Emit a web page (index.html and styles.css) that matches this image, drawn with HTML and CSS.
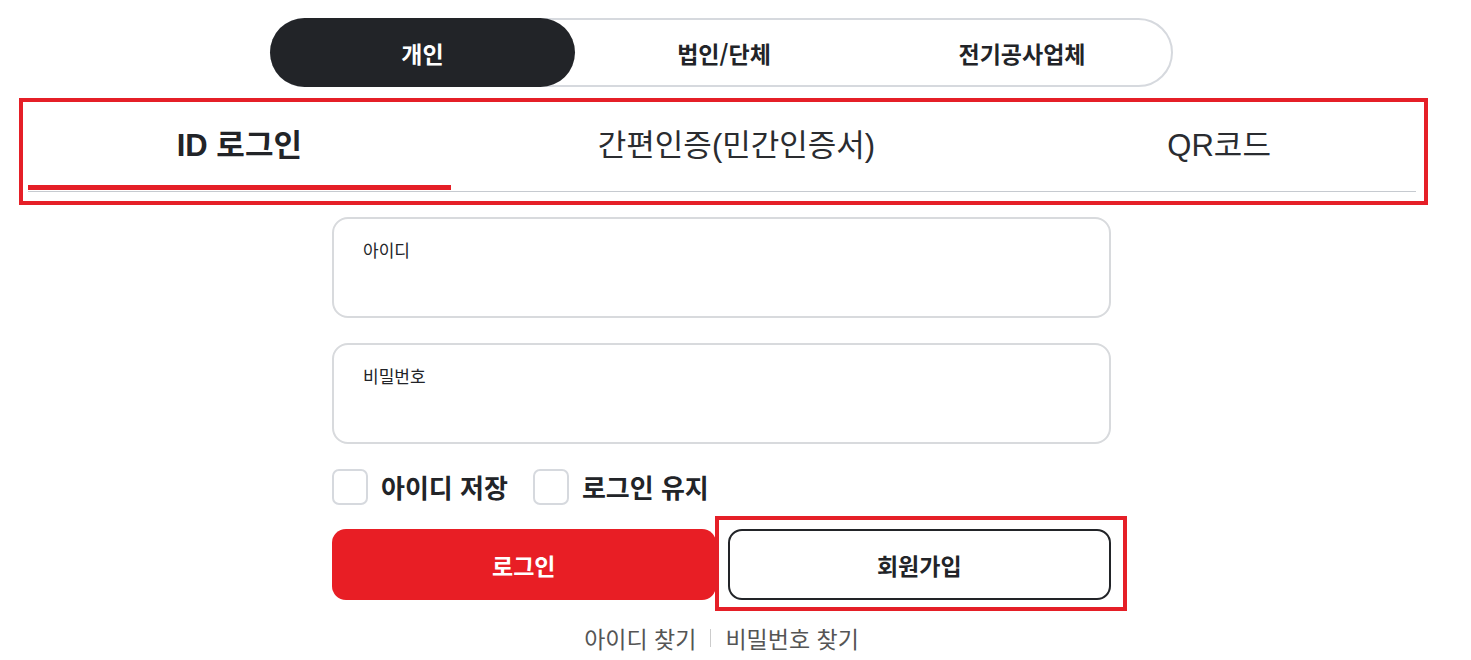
FILE: index.html
```
<!DOCTYPE html>
<html lang="ko">
<head>
  <meta charset="UTF-8">
  <title>로그인</title>
  <link rel="stylesheet" href="styles.css">
</head>
<body>
  <main class="login">
    <nav class="member-type">
      <button class="member-type__item member-type__item--active">개인</button>
      <button class="member-type__item">법인/단체</button>
      <button class="member-type__item">전기공사업체</button>
    </nav>

    <div class="tabs-wrap">
      <ul class="tabs">
        <li class="tabs__item tabs__item--active">ID 로그인</li>
        <li class="tabs__item">간편인증(민간인증서)</li>
        <li class="tabs__item">QR코드</li>
      </ul>
    </div>

    <form class="form">
      <label class="field">
        <span class="field__label">아이디</span>
        <input class="field__input" type="text">
      </label>
      <label class="field">
        <span class="field__label">비밀번호</span>
        <input class="field__input" type="password">
      </label>

      <div class="checks">
        <label class="check"><span class="check__box"></span>아이디 저장</label>
        <label class="check"><span class="check__box"></span>로그인 유지</label>
      </div>

      <div class="actions">
        <button type="button" class="btn btn--primary">로그인</button>
        <div class="actions__mark">
          <button type="button" class="btn btn--outline">회원가입</button>
        </div>
      </div>

      <div class="find">
        <a href="#">아이디 찾기</a>
        <span class="find__sep"></span>
        <a href="#">비밀번호 찾기</a>
      </div>
    </form>
  </main>
</body>
</html>
```

FILE: styles.css
```
body {
  margin: 0;
  background: #fff;
  color: #222428;
  font-family: "Noto Sans CJK KR", "Liberation Sans", sans-serif;
}
.login {
  width: 1443px;
  padding-top: 18px;
}

/* member type switch */
.member-type {
  display: flex;
  width: 903px;
  height: 69px;
  margin: 0 auto;
  box-sizing: border-box;
  border: 2px solid #d6d9de;
  border-radius: 35px;
}
.member-type__item {
  flex: 1;
  margin: -2px 0;
  padding: 0;
  border: 0;
  background: none;
  border-radius: 35px;
  font-family: inherit;
  font-size: 23px;
  font-weight: 700;
  color: #222428;
}
.member-type__item--active {
  margin-left: -2px;
  flex: 0 0 305px;
  background: #222428;
  color: #fff;
}

/* login tabs, with the red mark around them */
.tabs-wrap {
  margin: 11px 15px 0 19px;
  padding: 0 8px 9px 5px;
  border: 4px solid #e51f27;
}
.tabs {
  display: grid;
  grid-template-columns: 423fr 572fr 394fr;
  margin: 0;
  padding: 0;
  list-style: none;
  border-bottom: 1px solid #c6cad0;
}
.tabs__item {
  position: relative;
  height: 89px;
  padding-bottom: 8px;
  box-sizing: border-box;
  display: flex;
  align-items: center;
  justify-content: center;
  font-family: "Liberation Sans", "Noto Sans CJK KR", sans-serif;
  font-size: 31px;
  color: #2a2c30;
}
.tabs__item--active {
  font-weight: 700;
  color: #222428;
}
.tabs__item--active::after {
  content: "";
  position: absolute;
  left: 0;
  right: 0;
  bottom: 1px;
  height: 5px;
  background: #e51f27;
}

/* form */
.form {
  width: 779px;
  margin: 12px auto 0;
}
.field {
  display: block;
  height: 101px;
  box-sizing: border-box;
  margin-bottom: 25px;
  padding: 21px 29px 0;
  border: 2px solid #d8dadd;
  border-radius: 16px;
}
.field__label {
  display: block;
  font-size: 17px;
  line-height: 20px;
  color: #222428;
}
.field__input {
  width: 100%;
  margin-top: 8px;
  border: 0;
  outline: none;
  font-size: 18px;
  background: none;
}
.checks {
  display: flex;
  gap: 25px;
  align-items: center;
}
.check {
  display: flex;
  align-items: center;
  gap: 13px;
  font-size: 26px;
  line-height: 32px;
  font-weight: 700;
  color: #222428;
}
.check__box {
  width: 36px;
  height: 36px;
  box-sizing: border-box;
  border: 2px solid #d6d9de;
  border-radius: 7px;
}

.actions {
  display: flex;
  gap: 12px;
  margin-top: 24px;
}
.actions > * {
  flex: 1;
}
.actions__mark {
  position: relative;
}
.actions__mark::after {
  content: "";
  position: absolute;
  top: -13px;
  bottom: -11px;
  left: -13px;
  right: -16px;
  border: 4px solid #e51f27;
  pointer-events: none;
}
.btn {
  width: 100%;
  height: 71px;
  padding: 0;
  border-radius: 14px;
  font-family: inherit;
  font-size: 23px;
  font-weight: 700;
}
.btn--primary {
  border: 0;
  background: #e81e25;
  color: #fff;
}
.btn--outline {
  border: 2px solid #222428;
  background: #fff;
  color: #222428;
}

.find {
  display: flex;
  justify-content: center;
  align-items: center;
  gap: 14px;
  margin-top: 21px;
  font-size: 23px;
}
.find a {
  color: #555;
  text-decoration: none;
}
.find__sep {
  width: 1px;
  height: 18px;
  background: #ccc;
}
```
